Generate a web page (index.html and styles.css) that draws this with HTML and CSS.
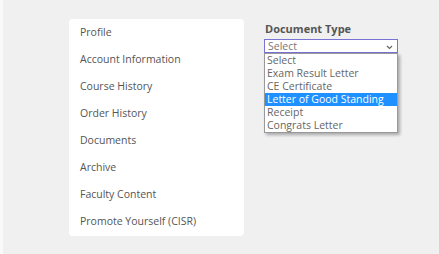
FILE: index.html
```html
<!DOCTYPE html>
<html lang="en">
<head>
  <meta charset="UTF-8">
  <title>My Account - Documents</title>
  <link rel="stylesheet" href="styles.css">
</head>
<body>

<div class="page">
  <ul class="side-menu">
    <li>Profile</li>
    <li>Account Information</li>
    <li>Course History</li>
    <li>Order History</li>
    <li>Documents</li>
    <li>Archive</li>
    <li>Faculty Content</li>
    <li>Promote Yourself (CISR)</li>
  </ul>

  <div class="doc-form">
    <label class="field-label">Document Type</label>
    <div class="select-wrap">
      <div class="select-box">
        <span>Select</span>
        <svg class="caret" width="7" height="5" viewBox="0 0 7 5"><path d="M1 1 L3.5 3.5 L6 1" fill="none" stroke="#666" stroke-width="1.2"/></svg>
      </div>
      <div class="field-ghost"></div>
      <div class="field-ghost second"></div>
      <ul class="options">
        <li>Select</li>
        <li>Exam Result Letter</li>
        <li>CE Certificate</li>
        <li class="active">Letter of Good Standing</li>
        <li>Receipt</li>
        <li>Congrats Letter</li>
      </ul>
    </div>
  </div>
</div>

</body>
</html>
```

FILE: styles.css
```css
body {
  margin: 0;
  background: #fafafa;
  font-family: "Open Sans", Arial, sans-serif;
}
.page {
  margin-left: 3px;
  height: 254px;
  background: #f0f0f0;
  display: flex;
  padding: 19px 0 0 66px;
  box-sizing: border-box;
  gap: 20px;
}
.side-menu {
  list-style: none;
  margin: 0;
  padding: 5px 0 0 11px;
  width: 164px;
  height: 212px;
  background: #fff;
  border-radius: 4px;
}
.side-menu li {
  height: 27px;
  line-height: 16px;
  font-size: 10.5px;
  color: #555;
}
.doc-form {
  padding-top: 2px;
}
.field-label {
  display: block;
  font-size: 11px;
  font-weight: bold;
  color: #555;
  margin: 0 0 3px 1px;
}
.select-wrap {
  position: relative;
  width: 134px;
}
.select-box {
  height: 12px;
  border: 1px solid #7a73d6;
  background: #fff;
  display: flex;
  justify-content: space-between;
  align-items: center;
  padding: 0 4px 0 3px;
  font-size: 10.5px;
  color: #777;
}
.caret {
  margin-top: 2px;
}
.field-ghost {
  height: 14px;
  margin-top: 18px;
  border: 1px solid #bbb;
  background: #e8e8e8;
  width: 60px;
}
.field-ghost.second {
  margin-top: 14px;
}
.options {
  position: absolute;
  top: 14px;
  left: 0;
  width: 132px;
  margin: 0;
  padding: 0;
  list-style: none;
  background: #fff;
  border: 1px solid #999;
  box-shadow: 2px 2px 3px rgba(0,0,0,0.3);
}
.options li {
  height: 13px;
  line-height: 13px;
  font-size: 10.5px;
  color: #666;
  padding-left: 2px;
  white-space: nowrap;
}
.options li.active {
  background: #1e90ff;
  color: #fff;
}
```
